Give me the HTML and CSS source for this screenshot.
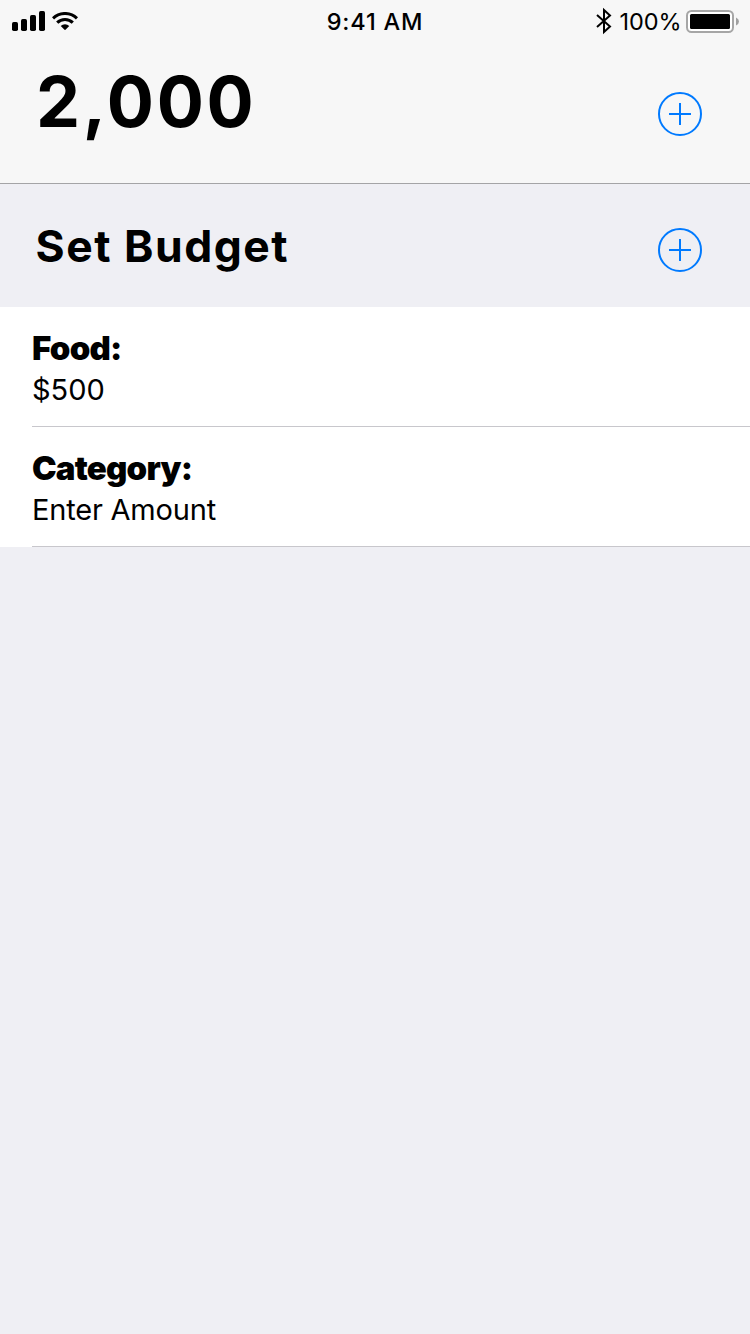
FILE: index.html
```html
<!DOCTYPE html>
<html lang="en">
<head>
<meta charset="utf-8">
<title>Budget</title>
<link rel="stylesheet" href="styles.css">
</head>
<body>
<header class="header">
  <div class="status">
    <div class="status-left">
      <svg class="signal" width="34" height="20" viewBox="0 0 34 20"><rect x="0" y="11" width="6" height="9" rx="1.7"/><rect x="9" y="8" width="6" height="12" rx="1.7"/><rect x="18" y="4" width="6" height="16" rx="1.7"/><rect x="27" y="0" width="6" height="20" rx="1.7"/></svg>
      <svg class="wifi" width="26" height="18" viewBox="0 0 26 18"><g fill="none" stroke="#000" stroke-width="3.1"><path d="M1 6.4A17.2 17.2 0 0 1 25 6.4"/><path d="M5.2 10.6A11.2 11.2 0 0 1 20.8 10.6"/></g><path d="M8.7 14A6.2 6.2 0 0 1 17.3 14L13 18.2Z"/></svg>
    </div>
    <div class="time">9:41 AM</div>
    <div class="status-right">
      <svg class="bluetooth" width="16" height="28" viewBox="0 0 16 28"><path d="M1 8L14 19.5L8 25V3L14 8.5L1 20" fill="none" stroke="#000" stroke-width="2"/></svg>
      <span class="percent">100%</span>
      <svg class="battery" width="54" height="24" viewBox="0 0 54 24"><rect x="1" y="1" width="46" height="21" rx="4.5" fill="#fff" stroke="#a6a6a6" stroke-width="2"/><rect x="4" y="4" width="40" height="15" rx="1.5"/><path d="M50 7.5Q53 9 53 11.5T50 15.5Z" fill="#a0a0a0"/></svg>
    </div>
  </div>
  <div class="total-row">
    <h1 class="total">2,000</h1>
    <svg class="add" width="44" height="44" viewBox="0 0 44 44"><circle cx="22" cy="22" r="21"/><path d="M22 11V33M11 22H33"/></svg>
  </div>
</header>
<section class="budget-row">
  <h2 class="budget-title">Set Budget</h2>
  <svg class="add" width="44" height="44" viewBox="0 0 44 44"><circle cx="22" cy="22" r="21"/><path d="M22 11V33M11 22H33"/></svg>
</section>
<main class="list">
  <div class="item"><div class="item-name food">Food:</div><div class="item-value amount">$500</div></div>
  <div class="item"><div class="item-name category">Category:</div><div class="item-value prompt">Enter Amount</div></div>
</main>
</body>
</html>
```
FILE: styles.css
```css
* { box-sizing: border-box; }
body { margin: 0; min-height: 1334px; background: #efeff4; color: #000; font-family: Inter, "Liberation Sans", sans-serif; }
svg { display: block; flex: none; }
h1, h2 { margin: 0; }
.header { height: 184px; background: #f7f7f7; border-bottom: 1px solid #a4a4a6; }
.status { display: grid; grid-template-columns: 1fr auto 1fr; height: 44px; }
.status-left { display: flex; align-items: flex-start; gap: 6px; padding: 11px 0 0 12px; }
.wifi { margin-top: 1px; }
.time { font-size: 23.5px; font-weight: 550; line-height: 44px; letter-spacing: 0.8px; white-space: nowrap; }
.status-right { display: flex; justify-content: flex-end; padding-right: 10px; }
.bluetooth { margin: 7px 8px 0 0; }
.percent { font-size: 23.5px; line-height: 44px; letter-spacing: -0.1px; }
.battery { margin: 10px 0 0 4.5px; }
.total-row { display: flex; justify-content: space-between; padding: 18px 48px 0 36px; }
.total { font-size: 70px; font-weight: 700; line-height: 80px; letter-spacing: 2.7px; }
.total-row .add { margin-top: 30px; }
.add { fill: none; stroke: #007aff; stroke-width: 2; }
.budget-row { display: flex; justify-content: space-between; height: 123px; padding: 32px 48px 0 35.5px; }
.budget-title { font-size: 44.5px; font-weight: 700; line-height: 60px; letter-spacing: 1.5px; }
.budget-row .add { margin-top: 12px; }
.list { background: #fff; padding-left: 32px; }
.item { height: 120px; padding-top: 21px; border-bottom: 1px solid #c8c7cc; }
.item-name { font-size: 33px; font-weight: 900; line-height: 40px; letter-spacing: -0.8px; }
.item-value { font-size: 29px; line-height: 40px; margin-top: 2px; }
.prompt { letter-spacing: -0.2px; }
```
